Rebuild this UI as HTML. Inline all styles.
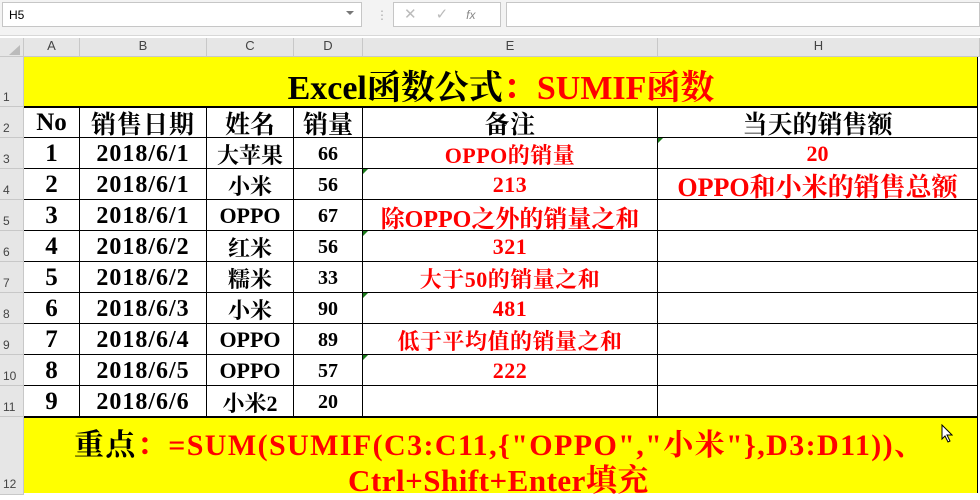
<!DOCTYPE html>
<html><head><meta charset="utf-8"><style>
*{margin:0;padding:0;box-sizing:border-box}
body{width:980px;height:495px;overflow:hidden;background:#fff;position:relative;font-family:"Liberation Serif","Noto Serif CJK SC",serif}
.a{position:absolute}
.hd{position:absolute;top:38px;height:19px;background:#e6e6e6;color:#444;font-family:"Liberation Sans",sans-serif;font-size:13px;text-align:center;border-right:1px solid #c8c8c8;border-bottom:1px solid #c8c8c8}
.rh{position:absolute;left:0;width:24px;height:31px;padding-top:14px;background:#e6e6e6;color:#444;font-family:"Liberation Sans",sans-serif;font-size:12px;border-bottom:1px solid #c8c8c8;border-right:1px solid #c8c8c8;padding-left:3px}
.row{position:absolute;left:24px;width:954px;height:31px}
.c{position:absolute;top:0;height:31px;padding-top:2px;border-right:1px solid #000;border-bottom:1px solid #000;display:flex;align-items:center;justify-content:center;font-weight:bold;white-space:nowrap;font-size:20px}
.A{left:0;width:56px;font-size:25px}
.B{left:56px;width:127px;font-size:24px;letter-spacing:1px}
.C{left:183px;width:87px;font-size:22px}
.D{left:270px;width:69px}
.E{left:339px;width:295px;color:#f00;font-size:22px;letter-spacing:0.5px}
.H{left:634px;width:320px;color:#f00;font-size:22px}
.h .c{font-size:25px;color:#000}
.g::before{content:"";position:absolute;left:0;top:0;border-top:5px solid #1a7a1a;border-right:5px solid transparent}
</style></head><body>
<div class="a" style="left:0;top:0;width:980px;height:36px;background:#f3f3f3;border-bottom:1px solid #d8d8d8"></div>
<div class="a" style="left:2px;top:2px;width:360px;height:25px;background:#fff;border:1px solid #c6c6c6;font-family:'Liberation Sans',sans-serif;font-size:12px;padding:5px 6px">H5</div>
<div class="a" style="left:346px;top:11px;border-left:4px solid transparent;border-right:4px solid transparent;border-top:4px solid #777"></div>
<div class="a" style="left:376px;top:8px;color:#aaa;font-size:12px">⋮</div>
<div class="a" style="left:393px;top:2px;width:108px;height:25px;background:#fff;border:1px solid #c6c6c6;color:#bbb;font-family:'Liberation Sans',sans-serif;font-size:15px;padding-top:2px"><span style="margin-left:10px">✕</span><span style="margin-left:19px">✓</span><span style="margin-left:18px;font-style:italic;font-size:12px;color:#888">fx</span></div>
<div class="a" style="left:506px;top:2px;width:474px;height:25px;background:#fff;border:1px solid #c6c6c6"></div>

<div class="hd" style="left:0;width:24px"></div>
<div class="a" style="left:9px;top:45px;border-left:11px solid transparent;border-bottom:10px solid #bbb"></div>
<div class="hd" style="left:24px;width:56px">A</div>
<div class="hd" style="left:80px;width:127px">B</div>
<div class="hd" style="left:207px;width:87px">C</div>
<div class="hd" style="left:294px;width:69px">D</div>
<div class="hd" style="left:363px;width:295px">E</div>
<div class="hd" style="left:658px;width:322px">H</div>

<div class="rh" style="top:57px;height:50px;padding-top:33px">1</div>
<div class="rh" style="top:107px">2</div>
<div class="rh" style="top:138px">3</div>
<div class="rh" style="top:169px">4</div>
<div class="rh" style="top:200px">5</div>
<div class="rh" style="top:231px">6</div>
<div class="rh" style="top:262px">7</div>
<div class="rh" style="top:293px">8</div>
<div class="rh" style="top:324px">9</div>
<div class="rh" style="top:355px">10</div>
<div class="rh" style="top:386px">11</div>
<div class="rh" style="top:417px;height:78px;padding-top:60px">12</div>

<div class="a" style="left:24px;top:57px;width:954px;height:50px;padding-top:4px;background:#ff0;display:flex;align-items:center;justify-content:center;font-size:34px;font-weight:bold;white-space:nowrap">Excel函数公式<span style="color:#f00">：SUMIF函数</span></div>

<div class="row h" style="top:107px"><div class="c A">No</div><div class="c B">销售日期</div><div class="c C">姓名</div><div class="c D">销量</div><div class="c E">备注</div><div class="c H">当天的销售额</div></div>
<div class="row" style="top:138px"><div class="c A">1</div><div class="c B">2018/6/1</div><div class="c C">大苹果</div><div class="c D">66</div><div class="c E">OPPO的销量</div><div class="c H g">20</div></div>
<div class="row" style="top:169px"><div class="c A">2</div><div class="c B">2018/6/1</div><div class="c C">小米</div><div class="c D">56</div><div class="c E g">213</div><div class="c H" style="font-size:26px">OPPO和小米的销售总额</div></div>
<div class="row" style="top:200px"><div class="c A">3</div><div class="c B">2018/6/1</div><div class="c C">OPPO</div><div class="c D">67</div><div class="c E" style="font-size:24px;letter-spacing:0">除OPPO之外的销量之和</div><div class="c H"></div></div>
<div class="row" style="top:231px"><div class="c A">4</div><div class="c B">2018/6/2</div><div class="c C">红米</div><div class="c D">56</div><div class="c E g">321</div><div class="c H"></div></div>
<div class="row" style="top:262px"><div class="c A">5</div><div class="c B">2018/6/2</div><div class="c C">糯米</div><div class="c D">33</div><div class="c E">大于50的销量之和</div><div class="c H"></div></div>
<div class="row" style="top:293px"><div class="c A">6</div><div class="c B">2018/6/3</div><div class="c C">小米</div><div class="c D">90</div><div class="c E g">481</div><div class="c H"></div></div>
<div class="row" style="top:324px"><div class="c A">7</div><div class="c B">2018/6/4</div><div class="c C">OPPO</div><div class="c D">89</div><div class="c E">低于平均值的销量之和</div><div class="c H"></div></div>
<div class="row" style="top:355px"><div class="c A">8</div><div class="c B">2018/6/5</div><div class="c C">OPPO</div><div class="c D">57</div><div class="c E g">222</div><div class="c H"></div></div>
<div class="row" style="top:386px"><div class="c A">9</div><div class="c B">2018/6/6</div><div class="c C">小米2</div><div class="c D">20</div><div class="c E"></div><div class="c H"></div></div>

<div class="a" style="left:24px;top:417px;width:954px;height:76px;background:#ff0"></div>
<div class="a" style="left:74px;top:420px;font-size:30px;font-weight:bold;white-space:nowrap;letter-spacing:1.4px">重点<span style="color:#f00">：=SUM(SUMIF(C3:C11,{"OPPO","小米"},D3:D11))、</span></div>
<div class="a" style="left:348px;top:455px;font-size:31px;font-weight:bold;white-space:nowrap;color:#f00;letter-spacing:0.5px">Ctrl+Shift+Enter填充</div>
<svg class="a" style="left:941px;top:424px" width="12" height="19"><path d="M1 1 L1 15 L4 12 L7 18 L9 17 L6 11 L11 11 Z" fill="#fff" stroke="#000" stroke-width="1"/></svg>

<div class="a" style="left:24px;top:106px;width:954px;height:2px;background:#000"></div>
<div class="a" style="left:24px;top:416px;width:954px;height:2px;background:#000"></div>
<div class="a" style="left:977px;top:57px;width:1px;height:436px;background:#000"></div>
</body></html>
